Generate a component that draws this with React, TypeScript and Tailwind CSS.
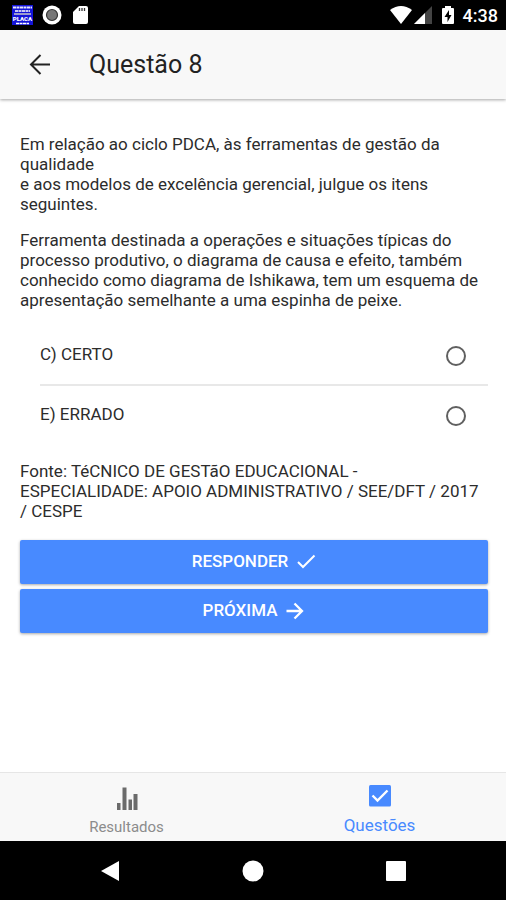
import { useState } from 'react';

const options = [
  { id: 'C', label: 'C) CERTO' },
  { id: 'E', label: 'E) ERRADO' },
];

const StatusBar = () => (
  <div className="flex h-[30px] shrink-0 items-center justify-between bg-black px-2 text-white">
    <div className="flex items-center gap-2 pl-1">
      <svg viewBox="0 0 21 20" className="h-5 w-[21px]">
        <rect width="21" height="20" fill="#1414d8" />
        <path d="M1 2.5H20" stroke="#e4e4fa" strokeWidth="2.2" strokeDasharray="3 0.5" />
        <path d="M3 6H18" stroke="#c8c8f4" strokeWidth="2" strokeDasharray="3 0.5" />
        <path d="M2 9H19" stroke="#9c9ccc" strokeWidth="2" />
        <text x="10.5" y="16" textAnchor="middle" fontFamily="Roboto, sans-serif" fontSize="6" fontWeight="900" fill="#fff">PLACA</text>
        <path d="M4 18.5H17" stroke="#fff" strokeWidth="1.5" strokeDasharray="3 0.5" />
      </svg>
      <svg viewBox="0 0 22 20" className="h-5 w-[22px]">
        <circle cx="11" cy="10" r="9.5" fill="#fff" />
        <circle cx="11" cy="10" r="5.5" fill="#777" stroke="#333" strokeWidth="1.2" />
      </svg>
      <svg viewBox="0 0 20 20" className="size-5">
        <path d="M8 1H15Q17 1 17 3V17Q17 19 15 19H4Q2 19 2 17V7Z" fill="#fff" />
        <path d="M8.500 3V6M11 3V6M13.500 3V6" stroke="#333" strokeWidth="1.3" />
      </svg>
    </div>
    <div className="flex items-center">
      <svg viewBox="0 0 24 20" className="h-5 w-6">
        <path d="M1 5Q12 -3 23 5L12 19Z" fill="#fff" />
      </svg>
      <svg viewBox="0 0 20 20" className="size-5">
        <path d="M1 19L19 1V19Z" fill="#444" />
        <path d="M1 19L12 8V19Z" fill="#fff" />
      </svg>
      <svg viewBox="0 0 14 20" className="ml-2 h-5 w-[14px]">
        <path d="M4 1H10V3H12Q13 3 13 4V18Q13 19 12 19H2Q1 19 1 18V4Q1 3 2 3H4Z" fill="#fff" />
        <path d="M8 5L3.500 12H6.500V17L10.500 10H8Z" fill="#000" />
      </svg>
      <span className="ml-2 pt-px text-lg leading-5 font-medium">4:38</span>
    </div>
  </div>
);

const Header = () => (
  <header className="z-10 flex h-[69px] shrink-0 items-center bg-[#f8f8f8] px-7 shadow-[0_1px_3px_rgba(0,0,0,0.35)]">
    <button type="button" aria-label="Voltar" className="text-[#222]">
      <svg viewBox="0 0 24 24" className="size-6" fill="none" stroke="currentColor" strokeWidth="2">
        <path d="M22 11.500H3M12.500 2L3 11.500L12.500 21" />
      </svg>
    </button>
    <h1 className="ml-[37px] text-[25px] font-normal text-[#222]">Questão 8</h1>
  </header>
);

const NavBar = () => (
  <div className="flex h-[59px] shrink-0 items-center justify-center gap-[121px] bg-black text-white">
    <button type="button" aria-label="Anterior">
      <svg viewBox="0 0 22 22" className="size-[22px]" fill="currentColor">
        <path d="M2 11L20 1V21Z" />
      </svg>
    </button>
    <button type="button" aria-label="Início">
      <svg viewBox="0 0 22 22" className="size-[22px]" fill="currentColor">
        <circle cx="11" cy="11" r="10.500" />
      </svg>
    </button>
    <button type="button" aria-label="Recentes">
      <svg viewBox="0 0 22 22" className="size-[22px]" fill="currentColor">
        <rect x="1" y="1" width="20" height="20" rx="1" />
      </svg>
    </button>
  </div>
);

const App = () => {
  const [answer, setAnswer] = useState('');

  return (
    <div className="flex min-h-screen flex-col bg-white font-[Roboto,sans-serif] text-[#2c2c2c]">
      <StatusBar />
      <Header />

      <main className="flex-1 pt-[35px] pr-[18px] pl-5 text-[17px] leading-5">
        <p>
          Em relação ao ciclo PDCA, às ferramentas de gestão da qualidade
          <br />
          e aos modelos de excelência gerencial, julgue os itens seguintes.
        </p>
        <p className="mt-4">
          Ferramenta destinada a operações e situações típicas do processo produtivo, o diagrama de
          causa e efeito, também conhecido como diagrama de Ishikawa, tem um esquema de apresentação
          semelhante a uma espinha de peixe.
        </p>

        <div className="mt-[17px] pl-5">
          {options.map((option) => (
            <label
              key={option.id}
              className="flex h-[59px] items-center justify-between border-b-2 border-[#e8e8e8] pr-[22px] last:border-b-0"
            >
              <span className="pb-1">{option.label}</span>
              <input
                type="radio"
                name="answer"
                value={option.id}
                checked={answer === option.id}
                onChange={() => setAnswer(option.id)}
                className="size-5 appearance-none rounded-full border-2 border-[#606060] checked:border-[6px] checked:border-[#488aff]"
              />
            </label>
          ))}
        </div>

        <p className="mt-4">
          Fonte: TéCNICO DE GESTãO EDUCACIONAL - ESPECIALIDADE: APOIO ADMINISTRATIVO / SEE/DFT / 2017
          / CESPE
        </p>

        <div className="mt-[19px] flex flex-col gap-[5px] font-medium text-white">
          <button type="button" className="flex h-11 items-center justify-center gap-2 rounded-xs bg-[#488aff] pb-0.5 shadow-[0_1px_3px_rgba(0,0,0,0.35)]">
            RESPONDER
            <svg viewBox="0 0 20 20" className="size-5" fill="none" stroke="currentColor" strokeWidth="2">
              <path d="M2 11L7 16L18.500 4.500" />
            </svg>
          </button>
          <button type="button" className="flex h-11 items-center justify-center gap-2 rounded-xs bg-[#488aff] pb-0.5 shadow-[0_1px_3px_rgba(0,0,0,0.35)]">
            PRÓXIMA
            <svg viewBox="0 0 20 20" className="size-5" fill="none" stroke="currentColor" strokeWidth="2.300">
              <path d="M1.500 11H16M9.500 3.500L17 11L9.500 18.500" />
            </svg>
          </button>
        </div>
      </main>

      <nav className="flex h-[69px] shrink-0 border-t border-[#e6e6e6] bg-[#f8f8f8]">
        <a href="#resultados" className="flex flex-1 flex-col items-center pt-3 text-[15px] text-[#8c8c8c]">
          <svg viewBox="0 0 24 26" className="h-[26px] w-6" fill="#6b6b6b">
            <path d="M2 18H5.500V25H2ZM7.500 2.500H11.500V25H7.500ZM13.500 14.500H17V25H13.500ZM18.500 9H22.500V25H18.500Z" />
          </svg>
          <span className="mt-1 leading-6">Resultados</span>
        </a>
        <a href="#questoes" className="flex flex-1 flex-col items-center pt-3 text-[17px] text-[#488aff]">
          <svg viewBox="0 0 24 24" className="size-6">
            <rect x="1" y="0" width="22" height="21.500" rx="1.500" fill="#488aff" />
            <path d="M4.500 10.500L9.500 15.500L19.500 5.500" fill="none" stroke="#fff" strokeWidth="2.400" />
          </svg>
          <span className="mt-1 leading-6">Questões</span>
        </a>
      </nav>
      <NavBar />
    </div>
  );
};

export default App;
